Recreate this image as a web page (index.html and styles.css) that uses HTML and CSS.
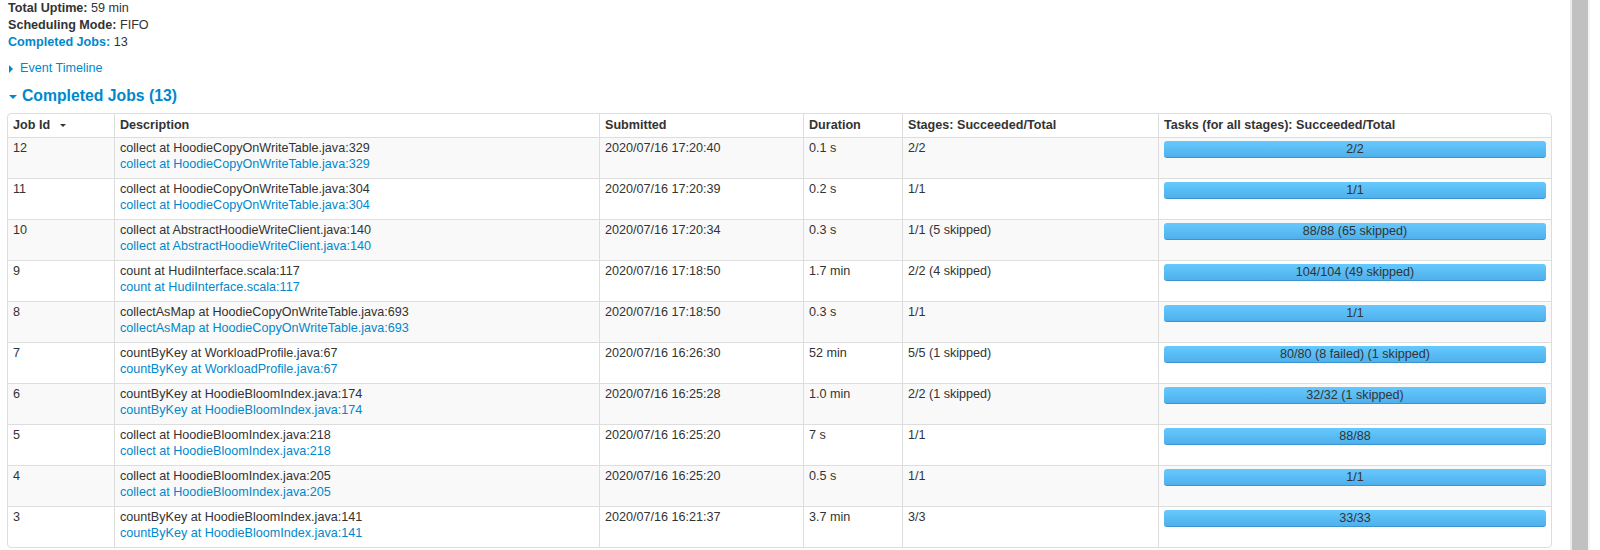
FILE: index.html
```html
<!DOCTYPE html>
<html>
<head>
<meta charset="utf-8">
<link rel="stylesheet" href="styles.css">
<title>Spark Jobs</title>
</head>
<body>
<div class="page">
  <main class="content">
    <ul class="summary">
      <li><strong>Total Uptime:</strong> 59 min</li>
      <li><strong>Scheduling Mode:</strong> FIFO</li>
      <li><a href="#completed"><strong>Completed Jobs:</strong></a> 13</li>
    </ul>
    <div class="timeline"><span class="arrow-right"></span><a href="#">Event Timeline</a></div>
    <h4 class="section-title" id="completed"><span class="arrow-down"></span>Completed Jobs (13)</h4>
    <table class="jobs">
      <colgroup>
        <col class="c-id"><col class="c-desc"><col class="c-sub"><col class="c-dur"><col class="c-stage"><col class="c-task">
      </colgroup>
      <thead>
        <tr>
          <th>Job Id <span class="sort-caret"></span></th>
          <th>Description</th>
          <th>Submitted</th>
          <th>Duration</th>
          <th>Stages: Succeeded/Total</th>
          <th>Tasks (for all stages): Succeeded/Total</th>
        </tr>
      </thead>
      <tbody>
        <tr><td>12</td><td>collect at HoodieCopyOnWriteTable.java:329<br><a href="#">collect at HoodieCopyOnWriteTable.java:329</a></td><td>2020/07/16 17:20:40</td><td>0.1 s</td><td>2/2</td><td><div class="bar">2/2</div></td></tr>
        <tr><td>11</td><td>collect at HoodieCopyOnWriteTable.java:304<br><a href="#">collect at HoodieCopyOnWriteTable.java:304</a></td><td>2020/07/16 17:20:39</td><td>0.2 s</td><td>1/1</td><td><div class="bar">1/1</div></td></tr>
        <tr><td>10</td><td>collect at AbstractHoodieWriteClient.java:140<br><a href="#">collect at AbstractHoodieWriteClient.java:140</a></td><td>2020/07/16 17:20:34</td><td>0.3 s</td><td>1/1 (5 skipped)</td><td><div class="bar">88/88 (65 skipped)</div></td></tr>
        <tr><td>9</td><td>count at HudiInterface.scala:117<br><a href="#">count at HudiInterface.scala:117</a></td><td>2020/07/16 17:18:50</td><td>1.7 min</td><td>2/2 (4 skipped)</td><td><div class="bar">104/104 (49 skipped)</div></td></tr>
        <tr><td>8</td><td>collectAsMap at HoodieCopyOnWriteTable.java:693<br><a href="#">collectAsMap at HoodieCopyOnWriteTable.java:693</a></td><td>2020/07/16 17:18:50</td><td>0.3 s</td><td>1/1</td><td><div class="bar">1/1</div></td></tr>
        <tr><td>7</td><td>countByKey at WorkloadProfile.java:67<br><a href="#">countByKey at WorkloadProfile.java:67</a></td><td>2020/07/16 16:26:30</td><td>52 min</td><td>5/5 (1 skipped)</td><td><div class="bar">80/80 (8 failed) (1 skipped)</div></td></tr>
        <tr><td>6</td><td>countByKey at HoodieBloomIndex.java:174<br><a href="#">countByKey at HoodieBloomIndex.java:174</a></td><td>2020/07/16 16:25:28</td><td>1.0 min</td><td>2/2 (1 skipped)</td><td><div class="bar">32/32 (1 skipped)</div></td></tr>
        <tr><td>5</td><td>collect at HoodieBloomIndex.java:218<br><a href="#">collect at HoodieBloomIndex.java:218</a></td><td>2020/07/16 16:25:20</td><td>7 s</td><td>1/1</td><td><div class="bar">88/88</div></td></tr>
        <tr><td>4</td><td>collect at HoodieBloomIndex.java:205<br><a href="#">collect at HoodieBloomIndex.java:205</a></td><td>2020/07/16 16:25:20</td><td>0.5 s</td><td>1/1</td><td><div class="bar">1/1</div></td></tr>
        <tr><td>3</td><td>countByKey at HoodieBloomIndex.java:141<br><a href="#">countByKey at HoodieBloomIndex.java:141</a></td><td>2020/07/16 16:21:37</td><td>3.7 min</td><td>3/3</td><td><div class="bar">33/33</div></td></tr>
      </tbody>
    </table>
  </main>
  <div class="rail"><div class="rail-thumb"></div></div>
</div>
</body>
</html>
```

FILE: styles.css
```css
html, body {
  margin: 0;
  padding: 0;
  height: 550px;
  overflow: hidden;
  background: #fff;
}

body {
  font-family: "Liberation Sans", Arial, Helvetica, sans-serif;
  font-size: 12.6px;
  color: #333;
}

a {
  color: #0088cc;
  text-decoration: none;
}

.page {
  display: flex;
  height: 550px;
}

.content {
  width: 1570px;
  flex-shrink: 0;
  padding-left: 7px;
  box-sizing: border-box;
  overflow: hidden;
}

.summary {
  list-style: none;
  margin: 0;
  padding: 0 0 0 1px;
  line-height: 17px;
}

.summary strong {
  font-weight: bold;
}

.timeline {
  margin-top: 9px;
  line-height: 17px;
  padding-left: 2px;
  display: flex;
  align-items: center;
}

.arrow-right {
  display: inline-block;
  width: 0;
  height: 0;
  border-top: 4px solid transparent;
  border-bottom: 4px solid transparent;
  border-left: 4px solid #0088cc;
  margin-right: 7px;
}

.section-title {
  margin: 9px 0 0 0;
  font-size: 15.75px;
  line-height: 20px;
  font-weight: bold;
  color: #0088cc;
  padding-left: 2px;
  display: flex;
  align-items: center;
}

.arrow-down {
  display: inline-block;
  width: 0;
  height: 0;
  border-left: 4px solid transparent;
  border-right: 4px solid transparent;
  border-top: 4px solid #0088cc;
  margin-right: 5px;
  margin-top: 1px;
}

.jobs {
  margin-top: 7px;
  width: 1545px;
  table-layout: fixed;
  border-collapse: separate;
  border-spacing: 0;
  border: 1px solid #ddd;
  border-radius: 4px;
}

.c-id { width: 106px; }
.c-desc { width: 485px; }
.c-sub { width: 204px; }
.c-dur { width: 99px; }
.c-stage { width: 256px; }
.c-task { width: 393px; }

.jobs th,
.jobs td {
  text-align: left;
  vertical-align: top;
  border-left: 1px solid #ddd;
  line-height: 16px;
  white-space: nowrap;
  overflow: hidden;
}

.jobs th:first-child,
.jobs td:first-child {
  border-left: none;
}

.jobs th {
  font-weight: bold;
  padding: 3px 5px 4px 5px;
}

.jobs td {
  border-top: 1px solid #ddd;
  padding: 2px 5px 6px 5px;
}

.jobs tbody tr:nth-child(odd) td {
  background: #f9f9f9;
}

.sort-caret {
  display: inline-block;
  width: 0;
  height: 0;
  border-left: 3px solid transparent;
  border-right: 3px solid transparent;
  border-top: 3px solid #333;
  margin-left: 6px;
  vertical-align: middle;
}

.bar {
  margin-top: 1px;
  height: 16px;
  line-height: 16px;
  text-align: center;
  color: #333;
  border-radius: 3px;
  background: linear-gradient(to bottom, #66c9fd, #4fb0ec);
  border-bottom: 1px solid #3b93d0;
}

.rail {
  width: 30px;
  display: flex;
  flex-shrink: 0;
}

.rail-thumb {
  width: 16px;
  background: #c1c1c1;
  border-left: 2px solid #ececec;
  border-right: 2px solid #f6f6f6;
}
```
